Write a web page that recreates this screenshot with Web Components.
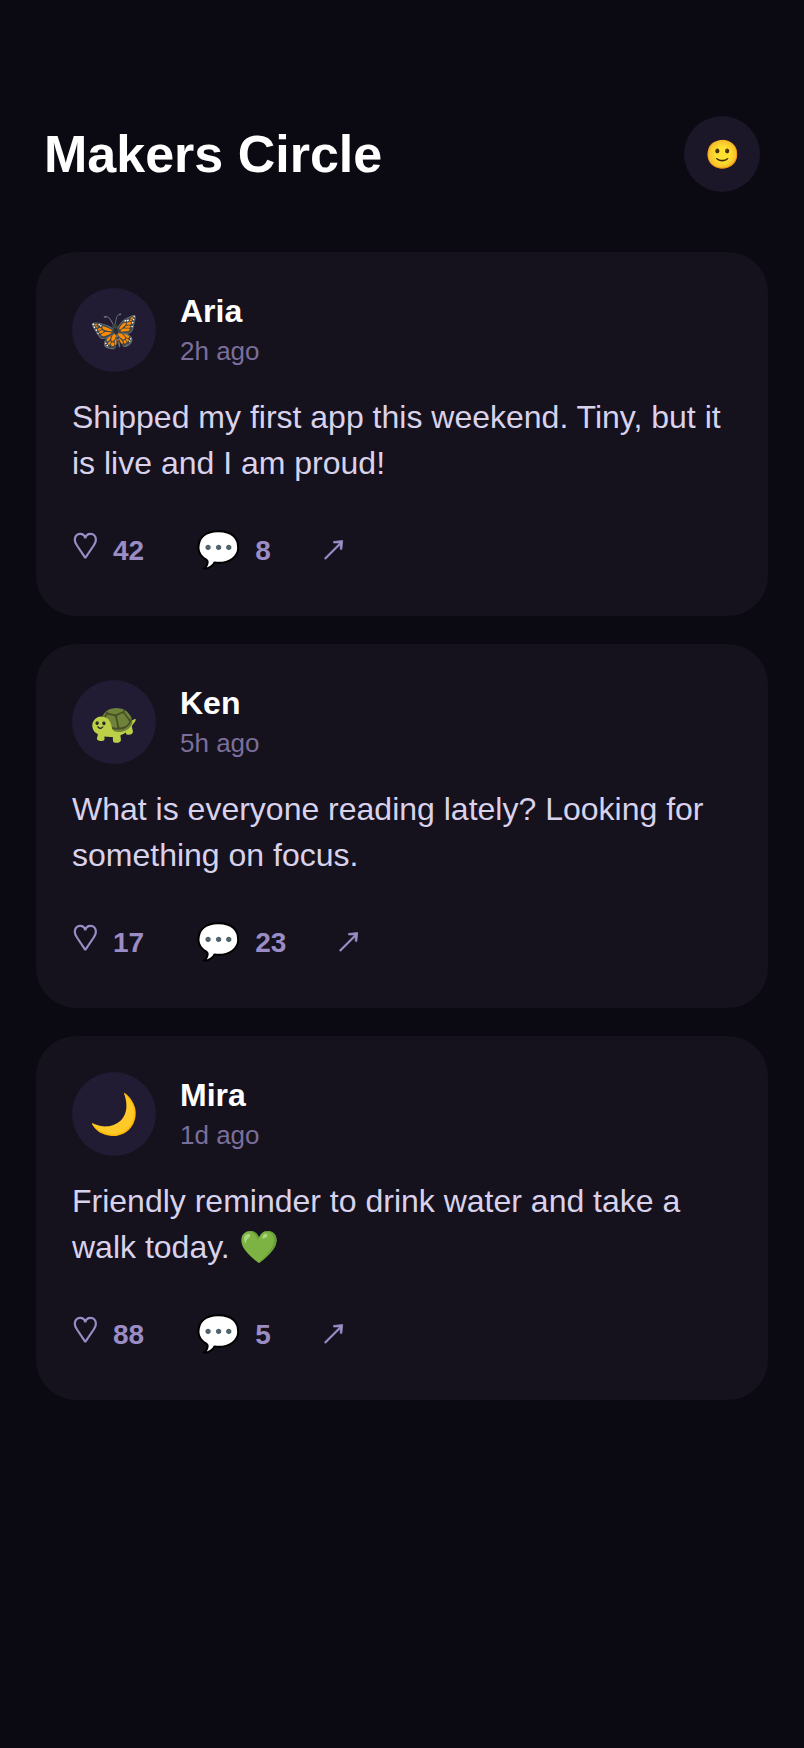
<!DOCTYPE html>
<html lang="en"><head><meta charset="utf-8"><title>Makers Circle</title>
<style>body{margin:0;background:#0b0a12;font-family:"Liberation Sans",Arial,sans-serif}</style></head><body>
<feed-screen>
<feed-post name="Aria" time="2h ago" likes="42" comments="8"><span slot="avatar">🦋</span>Shipped my first app this weekend. Tiny, but it is live and I am proud!</feed-post>
<feed-post name="Ken" time="5h ago" likes="17" comments="23"><span slot="avatar">🐢</span>What is everyone reading lately? Looking for something on focus.</feed-post>
<feed-post name="Mira" time="1d ago" likes="88" comments="5"><span slot="avatar">🌙</span>Friendly reminder to drink water and take a walk today. 💚</feed-post>
</feed-screen>
<script>
class FeedScreen extends HTMLElement{constructor(){super();this.attachShadow({mode:'open'}).innerHTML=`<style>
:host{display:block;box-sizing:border-box;min-height:1748px;padding:116px 36px 0;background:#0b0a12}
header{display:flex;justify-content:space-between;align-items:center;height:76px;padding:0 8px;margin-bottom:60px}
h1{margin:0;color:#fff;font-size:52px;line-height:60px;font-weight:700}
.me{display:flex;align-items:center;justify-content:center;width:76px;height:76px;border-radius:50%;background:#1c1728;font-size:28px}
main{display:flex;flex-direction:column;gap:28px}
</style><header><h1>Makers Circle</h1><div class="me">🙂</div></header><main><slot></slot></main>`}}
class FeedPost extends HTMLElement{constructor(){super();this.attachShadow({mode:'open'})}
connectedCallback(){const a=n=>this.getAttribute(n);this.shadowRoot.innerHTML=`<style>
:host{display:block;box-sizing:border-box;height:364px;padding:36px;border-radius:40px;background:#15111d}
.top{display:flex;align-items:center;gap:24px;height:84px}
.av{display:flex;align-items:center;justify-content:center;width:84px;height:84px;border-radius:50%;background:#211b33;font-size:40px}
.name{font-size:32px;line-height:37px;font-weight:700;color:#fff}
.time{font-size:26px;line-height:30px;margin-top:6px;padding-bottom:2px;color:#7a6f9b}
p{margin:22px 0 0;font-size:32px;line-height:46px;color:#d9d2ec}
.acts{display:flex;align-items:center;gap:52px;height:52px;margin-top:39px;color:#9a8cc4}
.acts div{display:flex;align-items:center;gap:14px}
.i{font-size:36px;line-height:42px;margin-bottom:2px}b{font-size:28px;line-height:32px}
svg{display:block;fill:none;stroke:currentColor;stroke-width:2.2;overflow:visible}
</style><div class="top"><div class="av"><slot name="avatar"></slot></div><div><div class="name">${a('name')}</div><div class="time">${a('time')}</div></div></div>
<p><slot></slot></p><div class="acts"><div><svg width="27" height="42" viewBox="0 0 27 42"><path stroke-linejoin="bevel" d="M13.3 27.8L5 15.5C3.6 13.4 2.8 11.6 2.8 9.7C2.8 6.1 5.1 3.8 8 3.8C10.8 3.8 12.9 5.6 13.3 8.4C13.7 5.6 15.8 3.8 18.6 3.8C21.6 3.8 23.9 6.1 23.9 9.7C23.9 11.6 23.1 13.4 21.7 15.5Z"/></svg><b>${a('likes')}</b></div><div><span class="i">💬</span><b>${a('comments')}</b></div><div><svg width="26" height="42" viewBox="0 0 26 42"><path d="M1.8 29L18 12.7"/><path d="M10.5 11.5L19.7 10.6L18.8 19.4L17.4 19.3L17 14L15.8 12.9L10.6 12.9Z" fill="currentColor" stroke-width=".8"/></svg></div></div>`}}
customElements.define('feed-screen',FeedScreen);customElements.define('feed-post',FeedPost);
</script></body></html>
